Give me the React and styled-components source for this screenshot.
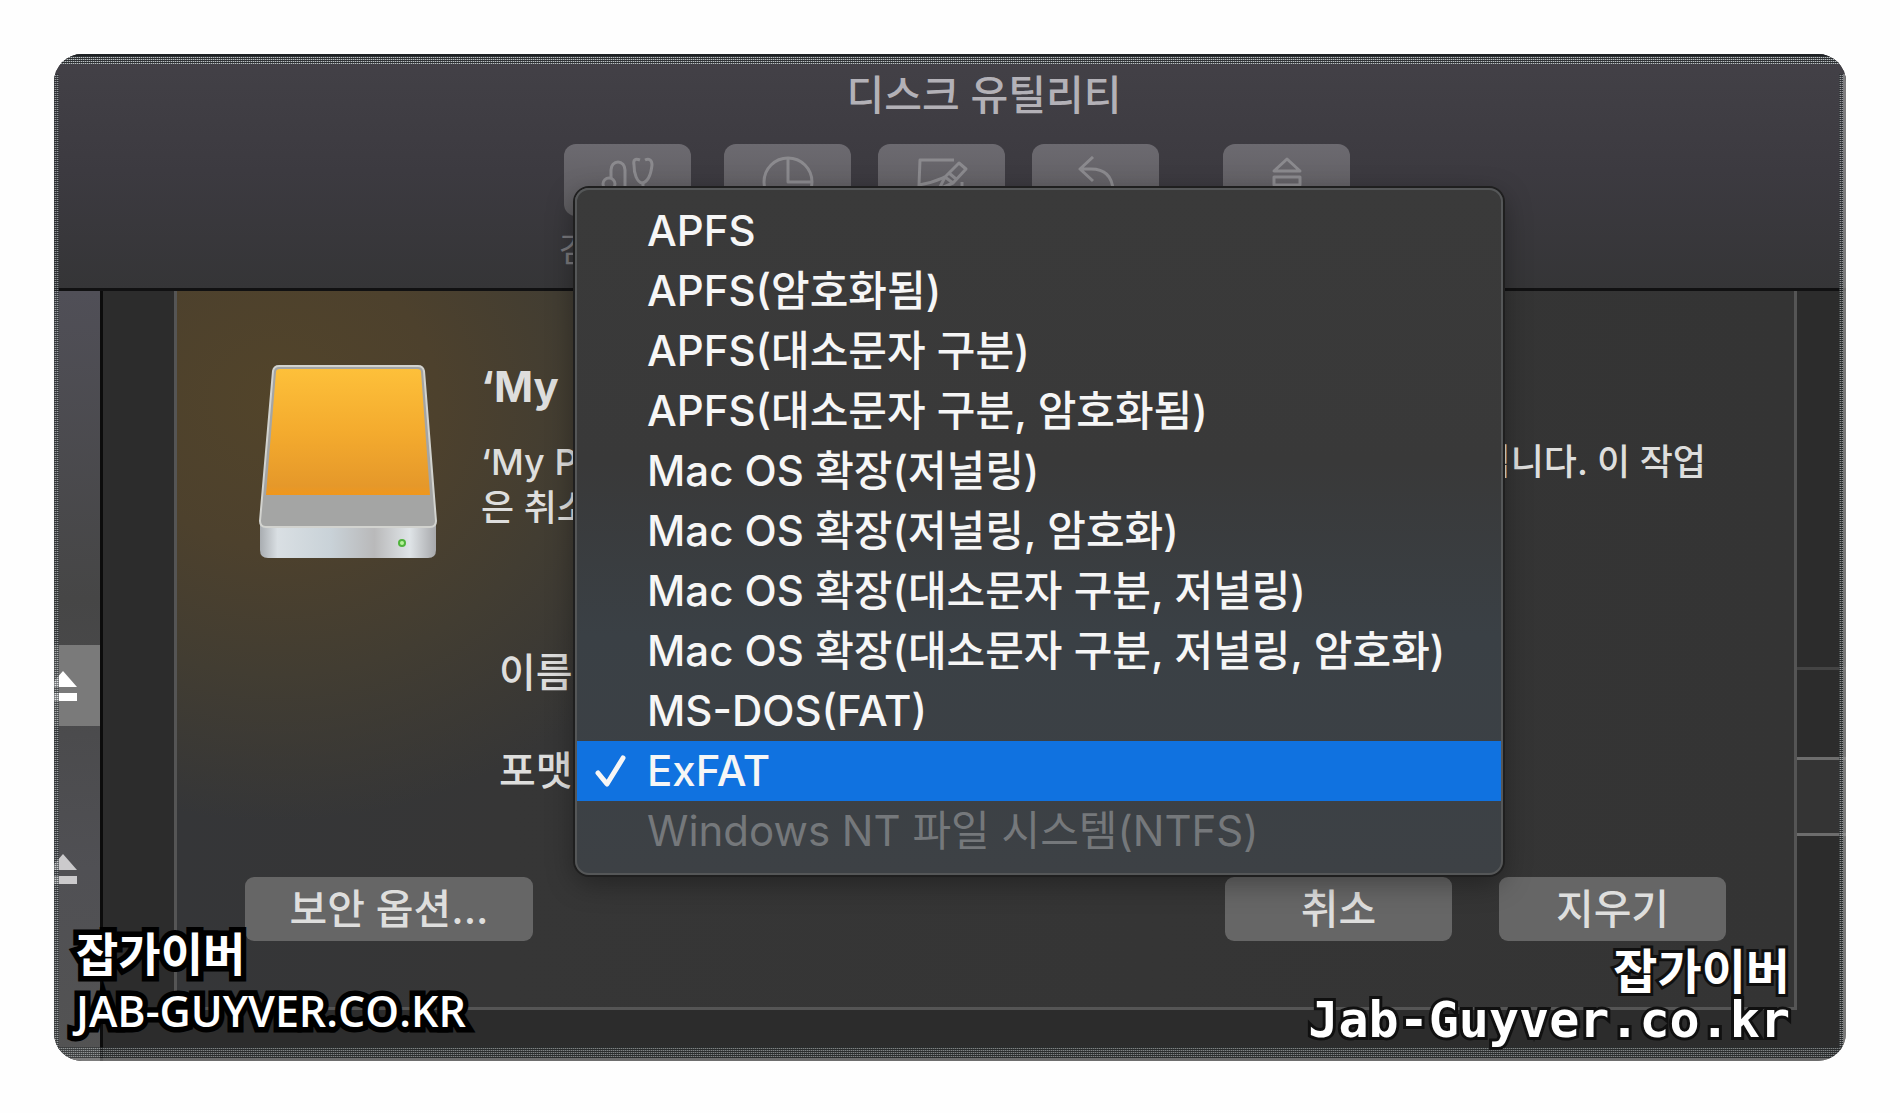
import React from 'react'
import styled, { createGlobalStyle, css } from 'styled-components'

const GlobalStyle = createGlobalStyle`
*{
    box-sizing: border-box;
    margin: 0;
    padding: 0;
}
body{
    background-color: #fefefe;
    font-family: Inter, "Noto Sans CJK KR", sans-serif;
    color: #dededd;
}
button{
    font: inherit;
    color: inherit;
    border: none;
    background: none;
}
ul{
    list-style: none;
}
`

const Page = styled.div`
display: flex;
min-height: 100vh;
padding: 54px 54px 52px;
`

const Window = styled.main`
position: relative;
flex: 1;
display: flex;
flex-direction: column;
overflow: hidden;
border-radius: 28px;
background-color: #2c2c2c;
`

const Header = styled.header`
height: 237px;
padding-top: 11px;
border-bottom: 3px solid #111112;
background: linear-gradient(#434147, #3c3a40 50%, #353537);
`

const Title = styled.h1`
padding-left: 68px;
text-align: center;
font-size: 41px;
font-weight: 500;
line-height: 60px;
color: #b3b1b7;
`

const Toolbar = styled.div`
display: flex;
justify-content: center;
gap: 27px;
margin-top: 19px;
padding-left: 14px;
`

const Tool = styled.div`
display: flex;
flex-direction: column;
align-items: center;
width: 127px;
margin-left: ${({ $apart }) => ($apart ? '37px' : '0')};
font-size: 34px;
line-height: 68px;
white-space: nowrap;
color: #77767a;
&:first-child{
    margin-right: 6px;
}
`

const ToolButton = styled.button`
display: grid;
place-items: center;
width: 100%;
height: 72px;
border-radius: 12px;
background: linear-gradient(#6c6a70, #646267 50%, #5c5b5e);
color: #8b8a8e;
`

const Body = styled.div`
flex: 1;
display: flex;
`

const Sidebar = styled.aside`
width: 49px;
padding-top: 354px;
border-right: 3px solid #0c0c0c;
background: linear-gradient(#504f57, #464646 40%, #505054 75%, #535353);
`

const Volume = styled.button`
display: flex;
align-items: center;
justify-content: flex-end;
width: 100%;
height: 81px;
padding-right: 23px;
margin-bottom: ${({ $selected }) => ($selected ? '102px' : '0')};
background-color: ${({ $selected }) => ($selected ? '#7a7a7a' : 'transparent')};
color: ${({ $selected }) => ($selected ? '#ffffff' : '#cbcacc')};
& > svg{
    flex-shrink: 0;
}
`

const Content = styled.div`
flex: 1;
display: flex;
padding: 0 0 51px 71px;
`

const Sheet = styled.section`
flex: 1;
display: flex;
flex-direction: column;
padding: 72px 68px 66px;
border: 3px solid #555555;
border-top: none;
background:
    radial-gradient(460px 420px at 100px 110px, #52442a, #4d412d 35%, #423d32 65%, rgba(54, 54, 54, 0)),
    linear-gradient(90deg, #353638, #363636 20%, #343434);
`

const Intro = styled.div`
display: flex;
& > svg{
    flex-shrink: 0;
    margin-left: 13px;
}
`

const Message = styled.div`
flex: 1;
padding-left: 43px;
& > h2{
    font-size: 42px;
    font-weight: 700;
    line-height: 48px;
}
`

const Line = styled.p`
display: flex;
justify-content: space-between;
padding-right: 20px;
margin-top: ${({ $first }) => ($first ? '28px' : '0')};
font-size: 36px;
font-weight: 500;
line-height: 46px;
`

const Fields = styled.div`
display: flex;
flex-direction: column;
gap: 38px;
margin-top: 80px;
padding-left: 254px;
font-size: 40px;
font-weight: 500;
line-height: 60px;
`

const Actions = styled.div`
display: flex;
gap: 47px;
margin-top: auto;
`

const Button = styled.button`
width: ${({ $wide }) => ($wide ? '288px' : '227px')};
height: 64px;
margin-right: ${({ $wide }) => ($wide ? 'auto' : '0')};
border-radius: 9px;
background-color: #666666;
font-size: 41px;
font-weight: 500;
line-height: 60px;
`

const Behind = styled.div`
width: 49px;
padding-top: 376px;
& > div{
    height: 79px;
    border-top: 3px solid #6d6d6d;
    background-color: #343434;
}
& > div:first-child{
    height: 90px;
    border-color: #444444;
    background: none;
}
& > div:last-child{
    border-bottom: 3px solid #6d6d6d;
}
`

const Menu = styled.ul`
position: absolute;
top: 134px;
left: 521px;
width: 928px;
padding: 11px 0 12px;
border: 2px solid #555758;
border-radius: 14px;
background: linear-gradient(#3a3a3a, #393939 40%, #3a4045 65%, #3d4145);
box-shadow: 0 0 0 2px #1f1f1f, 0 8px 28px rgba(0, 0, 0, 0.35);
`

const Option = styled.button`
display: grid;
grid-template-columns: 70px 1fr;
align-items: center;
width: 100%;
height: 60px;
text-align: left;
font-size: 42px;
font-weight: 500;
line-height: 60px;
white-space: nowrap;
color: #f6f6f6;
& > span{
    grid-column: 2;
}
& > svg{
    grid-row: 1;
    margin-left: 17px;
}
${({ $selected }) => $selected && css`
    background-color: #1072e0;
`}
&:disabled{
    font-weight: 400;
    color: #75787b;
}
`

const Mark = styled.div`
position: absolute;
bottom: 22px;
left: 22px;
font-family: "Open Sans", "Noto Sans CJK KR", sans-serif;
font-size: 43px;
font-weight: 600;
line-height: 57px;
color: #ffffff;
-webkit-text-stroke: 11px #000000;
stroke-linejoin: round;
paint-order: stroke fill;
& > strong{
    display: block;
    font-size: 46px;
    font-weight: 700;
}
`

const CornerMark = styled(Mark)`
left: auto;
right: 56px;
bottom: 17px;
font-family: "DejaVu Sans Mono", "Noto Sans CJK KR", monospace;
font-size: 50px;
font-weight: 700;
line-height: 48px;
text-align: right;
-webkit-text-stroke: 6px #101010;
& > strong{
    font-size: 48px;
}
`

const dots = css`
background-image:
    repeating-linear-gradient(90deg, rgba(40, 44, 46, 0.6) 0 1px, transparent 1px 2px),
    repeating-linear-gradient(rgba(40, 44, 46, 0.8) 0 1px, rgba(205, 212, 214, 0.85) 1px 2px);
`

const TopEdge = styled.div`
position: absolute;
top: 0;
left: 0;
right: 0;
height: 10px;
border-top: 2px solid #1d2124;
${dots}
`

const SideEdge = styled.div`
position: absolute;
top: 20px;
bottom: 12px;
left: ${({ $right }) => ($right ? 'auto' : '0')};
right: ${({ $right }) => ($right ? '0' : 'auto')};
width: ${({ $right }) => ($right ? '7px' : '5px')};
border-right: ${({ $right }) => ($right ? '3px solid #999999' : 'none')};
opacity: 0.7;
${dots}
`

const BottomEdge = styled.div`
position: absolute;
left: 0;
right: 0;
bottom: 0;
height: 14px;
border-bottom: 3px solid #9a9a9a;
opacity: 0.6;
${dots}
`

const options = [
    { label: 'APFS' },
    { label: 'APFS(암호화됨)' },
    { label: 'APFS(대소문자 구분)' },
    { label: 'APFS(대소문자 구분, 암호화됨)' },
    { label: 'Mac OS 확장(저널링)' },
    { label: 'Mac OS 확장(저널링, 암호화)' },
    { label: 'Mac OS 확장(대소문자 구분, 저널링)' },
    { label: 'Mac OS 확장(대소문자 구분, 저널링, 암호화)' },
    { label: 'MS-DOS(FAT)' },
    { label: 'ExFAT', selected: true },
    { label: 'Windows NT 파일 시스템(NTFS)', disabled: true },
]

const ToolIcon = ({ children }) => (
    <svg width="60" height="48" viewBox="0 0 60 48" fill="none" stroke="currentColor" strokeWidth="3" strokeLinejoin="round" aria-hidden="true">
        {children}
    </svg>
)

const tools = [
    {
        name: '검사/복구',
        label: '검사/복구',
        icon: (
            <>
                <path d="M13 22V14a7 8 0 0 1 14 0V34a9 9 0 0 0 18 0V28" />
                <circle cx="11" cy="28" r="6" />
                <path d="M42 4C37 2 35 4 36 9C36 18 39 26 44 27C50 26 53 18 54 9C54 4 51 2 47 4" />
            </>
        ),
    },
    {
        name: '파티션',
        icon: (
            <>
                <circle cx="30" cy="26" r="24" />
                <path d="M30 2V26H54" />
            </>
        ),
    },
    {
        name: '지우기',
        icon: (
            <>
                <path d="M42 4H8L7 29C20 27 26 24 33 21M7 29V44H50V26" />
                <path d="M47 7L54 13L41 27L33 21ZM37 17L44 23M33 21L27 33L41 27" />
            </>
        ),
    },
    {
        name: '복원',
        icon: <path d="M27 1L14 13L27 25M14 13H25C38 13 46 19 47 34V42" />,
    },
    {
        name: '마운트 해제',
        apart: true,
        icon: <path d="M30 3L17 15H43ZM17 21H43V29H17Z" />,
    },
]

const Eject = () => (
    <svg width="28" height="32" viewBox="0 0 28 32" fill="currentColor" aria-hidden="true">
        <path d="M14 1L28 17H0ZM0 23H28V31H0Z" />
    </svg>
)

const Drive = () => (
    <svg width="180" height="200" viewBox="0 0 180 200" aria-hidden="true">
        <defs>
            <linearGradient id="cover" x1="0" y1="0" x2="0" y2="1">
                <stop offset="0" stopColor="#fdc03a" />
                <stop offset="0.5" stopColor="#f4ab2e" />
                <stop offset="0.93" stopColor="#e5982a" />
                <stop offset="1" stopColor="#f0971c" />
            </linearGradient>
            <linearGradient id="front">
                <stop offset="0" stopColor="#a9adb1" />
                <stop offset="0.1" stopColor="#d9dfe3" />
                <stop offset="0.4" stopColor="#c9d2d8" />
                <stop offset="0.65" stopColor="#b9b9ba" />
                <stop offset="0.85" stopColor="#dfe4e7" />
                <stop offset="1" stopColor="#a7a8ab" />
            </linearGradient>
        </defs>
        <path d="M2 158H178V187Q178 195 170 195H10Q2 195 2 187Z" fill="url(#front)" />
        <path d="M21 3H160Q165 3 166 8L178 158Q178 164 172 164H8Q2 164 2 158L15 8Q16 3 21 3Z" fill="#a4a5a4" stroke="#d2d3cf" strokeWidth="2" />
        <path d="M22 6H159Q163 6 163 9L172 132H8L18 9Q18 6 22 6Z" fill="url(#cover)" />
        <circle cx="144" cy="180" r="4" fill="#4fb43c" />
        <circle cx="144" cy="180" r="2" fill="#b6f29a" />
    </svg>
)

const Check = () => (
    <svg width="34" height="34" viewBox="0 0 34 34" fill="none" stroke="currentColor" strokeWidth="5" strokeLinecap="round" strokeLinejoin="round" aria-hidden="true">
        <path d="M4 19L13 30L29 4" />
    </svg>
)

function App() {
    return (
        <>
            <GlobalStyle />
            <Page>
                <Window>
                    <Header>
                        <Title>디스크 유틸리티</Title>
                        <Toolbar>
                            {tools.map(({ name, label, icon, apart }) => (
                                <Tool key={name} $apart={apart}>
                                    <ToolButton aria-label={name}>
                                        <ToolIcon>{icon}</ToolIcon>
                                    </ToolButton>
                                    {label}
                                </Tool>
                            ))}
                        </Toolbar>
                    </Header>
                    <Body>
                        <Sidebar>
                            <Volume $selected aria-label="추출"><Eject /></Volume>
                            <Volume aria-label="추출"><Eject /></Volume>
                        </Sidebar>
                        <Content>
                            <Sheet>
                                <Intro>
                                    <Drive />
                                    <Message>
                                        <h2>‘My</h2>
                                        <Line $first><span>‘My P</span><span>됩니다. 이 작업</span></Line>
                                        <Line>은 취소</Line>
                                    </Message>
                                </Intro>
                                <Fields>
                                    <p>이름</p>
                                    <p id="format">포맷</p>
                                </Fields>
                                <Actions>
                                    <Button $wide>보안 옵션...</Button>
                                    <Button>취소</Button>
                                    <Button>지우기</Button>
                                </Actions>
                            </Sheet>
                            <Behind>
                                <div />
                                <div />
                            </Behind>
                        </Content>
                    </Body>
                    <Menu aria-labelledby="format">
                        {options.map(({ label, selected, disabled }) => (
                            <li key={label}>
                                <Option $selected={selected} disabled={disabled}>
                                    {selected && <Check />}
                                    <span>{label}</span>
                                </Option>
                            </li>
                        ))}
                    </Menu>
                    <TopEdge />
                    <SideEdge />
                    <SideEdge $right />
                    <BottomEdge />
                    <Mark>
                        <strong>잡가이버</strong>
                        JAB-GUYVER.CO.KR
                    </Mark>
                    <CornerMark>
                        <strong>잡가이버</strong>
                        Jab-Guyver.co.kr
                    </CornerMark>
                </Window>
            </Page>
        </>
    )
}

export default App
